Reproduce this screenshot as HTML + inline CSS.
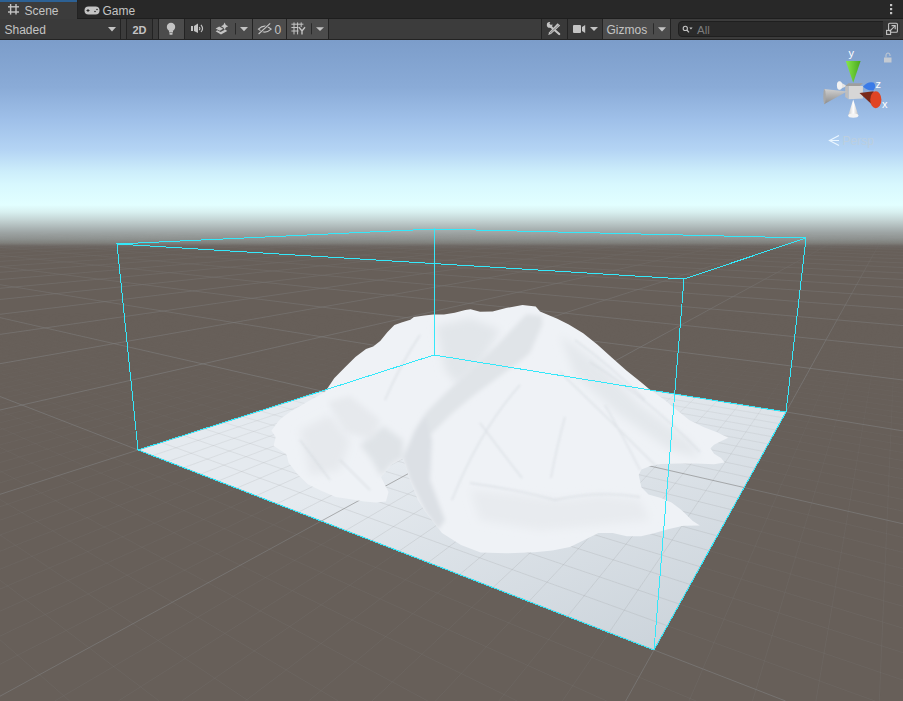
<!DOCTYPE html>
<html><head><meta charset="utf-8"><style>
*{margin:0;padding:0;box-sizing:border-box}
html,body{width:903px;height:701px;overflow:hidden;background:#282828;font-family:"Liberation Sans",sans-serif;position:relative}
.t{position:absolute;color:#c4c4c4;font-size:12px;line-height:14px;white-space:nowrap}
</style></head><body>
<svg width="903" height="40" viewBox="0 0 903 40" style="position:absolute;left:0;top:0">
<rect x="0" y="0" width="903" height="18" fill="#282828"/>
<rect x="0" y="18" width="903" height="1" fill="#1e1e1e"/>
<rect x="0" y="0" width="77" height="19" fill="#3c3c3c"/>
<rect x="0" y="0" width="77" height="2" fill="#2d6194"/>
<rect x="77" y="0" width="1" height="18" fill="#232323"/>
<rect x="0" y="19" width="903" height="20" fill="#3c3c3c"/>
<rect x="0" y="39" width="903" height="1" fill="#232323"/>
<!-- scene tab icon # -->
<g stroke="#c4c4c4" stroke-width="1.4">
<line x1="10.6" y1="4" x2="10.6" y2="14.6"/><line x1="16" y1="4" x2="16" y2="14.6"/>
<line x1="8" y1="6.8" x2="19" y2="6.8"/><line x1="8" y1="12" x2="19" y2="12"/>
</g>
<!-- game icon -->
<rect x="84.5" y="6.5" width="15" height="8" rx="4" fill="#c4c4c4"/>
<g stroke="#282828" stroke-width="1"><line x1="86.5" y1="10.5" x2="89.5" y2="10.5"/><line x1="88" y1="9" x2="88" y2="12"/></g>
<circle cx="95" cy="11.5" r="0.8" fill="#282828"/><circle cx="97" cy="9.5" r="0.8" fill="#282828"/>
<!-- Shaded dropdown -->
<rect x="0" y="19" width="120" height="20" fill="#3a3a3a"/>
<polygon points="108,27 116,27 112,31.6" fill="#c4c4c4"/>
<rect x="120" y="19" width="1" height="20" fill="#232323"/>
<rect x="126" y="19" width="1" height="20" fill="#232323"/>
<rect x="127" y="19" width="25" height="20" fill="#383838"/>
<rect x="152" y="19" width="1" height="20" fill="#232323"/>
<rect x="158" y="19" width="1" height="20" fill="#232323"/>
<rect x="159" y="19" width="25" height="20" fill="#4c4c4c"/>
<rect x="184" y="19" width="1" height="20" fill="#232323"/>
<rect x="185" y="19" width="25" height="20" fill="#383838"/>
<rect x="210" y="19" width="1" height="20" fill="#232323"/>
<rect x="211" y="19" width="41" height="20" fill="#4c4c4c"/>
<rect x="252" y="19" width="1" height="20" fill="#232323"/>
<rect x="253" y="19" width="33" height="20" fill="#4c4c4c"/>
<rect x="286" y="19" width="1" height="20" fill="#232323"/>
<rect x="287" y="19" width="41" height="20" fill="#4c4c4c"/>
<rect x="328" y="19" width="1" height="20" fill="#232323"/>
<!-- bulb -->
<circle cx="171" cy="27" r="4.2" fill="#c4c4c4"/>
<rect x="169" y="31" width="4" height="1.5" fill="#c4c4c4"/>
<rect x="169.3" y="33" width="3.4" height="1.8" rx="0.8" fill="#c4c4c4"/>
<!-- audio -->
<rect x="191" y="26" width="2" height="5" fill="#c4c4c4"/>
<polygon points="194,26 198,23.6 198,33 194,31" fill="#c4c4c4"/>
<path d="M199.2 27.2 Q200.6 28.6 199.2 30" stroke="#c4c4c4" stroke-width="1.1" fill="none"/>
<path d="M201 24.8 Q204 28.6 201 32" stroke="#c4c4c4" stroke-width="1.1" fill="none"/>
<!-- effects -->
<path d="M224.6 22.6 Q225.2 25.7 228.2 26.3 Q225.2 26.9 224.6 30 Q224 26.9 221 26.3 Q224 25.7 224.6 22.6Z" fill="#c4c4c4"/>
<path d="M215.6 28.6 L219.2 26.4 L223.2 28.8 L219.8 30.8 Z" fill="#c4c4c4"/>
<path d="M215.6 31.2 L217.4 30.2 L220.6 32 L225.2 29.6 L227.2 31 L221 34.6 Z" fill="#c4c4c4"/>
<rect x="235" y="23" width="1" height="11.5" fill="#2a2a2a"/>
<polygon points="240,27 248,27 244,31.3" fill="#c4c4c4"/>
<!-- eye slash -->
<path d="M258.4 29.1 Q264.8 23 271.2 29.1 Q264.8 35 258.4 29.1Z" stroke="#c4c4c4" stroke-width="1.1" fill="none"/>
<line x1="258.6" y1="34" x2="270.2" y2="23.3" stroke="#4c4c4c" stroke-width="2.4"/>
<line x1="258.6" y1="34" x2="270.2" y2="23.3" stroke="#c4c4c4" stroke-width="1.1"/>
<!-- grid Y -->
<g stroke="#c4c4c4" stroke-width="1">
<line x1="294" y1="22.4" x2="294" y2="34.4"/><line x1="297.6" y1="22.4" x2="297.6" y2="34.4"/><line x1="301.2" y1="22.4" x2="301.2" y2="27"/>
<line x1="291.4" y1="24.2" x2="303.4" y2="24.2"/><line x1="291.4" y1="27.5" x2="298.5" y2="27.5"/><line x1="291.4" y1="31" x2="298.5" y2="31"/>
</g>
<path d="M299 27.3 L302 31 L305 27.3 M302 31 L302 34.4" stroke="#c4c4c4" stroke-width="1.4" fill="none"/>
<rect x="311" y="23.3" width="1" height="11" fill="#2a2a2a"/>
<polygon points="316,27.2 324,27.2 320,31" fill="#c4c4c4"/>
<!-- right side -->
<rect x="541" y="19" width="1" height="20" fill="#232323"/>
<rect x="542" y="19" width="25" height="20" fill="#393939"/>
<rect x="567" y="19" width="1" height="20" fill="#232323"/>
<rect x="568" y="19" width="34" height="20" fill="#393939"/>
<rect x="602" y="19" width="1" height="20" fill="#232323"/>
<rect x="603" y="19" width="67" height="20" fill="#4c4c4c"/>
<rect x="670" y="19" width="1" height="20" fill="#232323"/>
<!-- tools -->
<line x1="550.5" y1="26.5" x2="559.2" y2="34" stroke="#c4c4c4" stroke-width="2.2" stroke-linecap="round"/>
<circle cx="549.6" cy="24.9" r="2.8" fill="#c4c4c4"/>
<circle cx="551.2" cy="23.3" r="1.5" fill="#393939"/>
<polygon points="557.6,23.2 560.2,25.6 551,34 548.2,35 549.2,32.2" fill="#c4c4c4"/>
<line x1="550" y1="33.2" x2="558.6" y2="25.2" stroke="#393939" stroke-width="0.5"/>
<!-- camera -->
<rect x="573" y="25" width="8" height="8" rx="1" fill="#c4c4c4"/>
<polygon points="582,27 585.2,25 585.2,33 582,31" fill="#c4c4c4"/>
<polygon points="590,27 598,27 594,31" fill="#c4c4c4"/>
<rect x="653" y="23.3" width="1" height="11" fill="#2a2a2a"/>
<polygon points="658,27.2 666,27.2 662,31.6" fill="#c4c4c4"/>
<!-- search -->
<rect x="678.5" y="21.5" width="221" height="15" rx="3.5" fill="#2a2a2a" stroke="#1f1f1f" stroke-width="1"/>
<circle cx="685.3" cy="28.4" r="2.1" stroke="#c4c4c4" stroke-width="1.1" fill="none"/>
<line x1="686.8" y1="30" x2="689" y2="32.4" stroke="#c4c4c4" stroke-width="1.2"/>
<polygon points="689.3,27.6 692.6,27.6 690.95,29.6" fill="#c4c4c4"/>
<rect x="883" y="21" width="8" height="16" fill="#353535"/><rect x="883" y="21" width="17" height="16" rx="3" fill="#353535"/>
<rect x="888.6" y="23.3" width="8.8" height="9" rx="1" stroke="#c4c4c4" stroke-width="1.1" fill="none"/>
<rect x="886.6" y="30.4" width="4" height="4" stroke="#c4c4c4" stroke-width="1.1" fill="#353535"/>
<line x1="889.5" y1="31.3" x2="895" y2="25.8" stroke="#c4c4c4" stroke-width="1.1"/>
<polyline points="891.5,25.6 895.2,25.6 895.2,29.3" stroke="#c4c4c4" stroke-width="1.1" fill="none"/>
<rect x="890" y="4" width="2.2" height="2.2" fill="#c4c4c4"/><rect x="890" y="8" width="2.2" height="2.2" fill="#c4c4c4"/><rect x="890" y="12" width="2.2" height="2.2" fill="#c4c4c4"/>
</svg>
<div class="t" style="left:24.5px;top:4px">Scene</div>
<div class="t" style="left:102.5px;top:4px">Game</div>
<div class="t" style="left:4.5px;top:23px">Shaded</div>
<div class="t" style="left:132.5px;top:23px;font-weight:bold;font-size:11px">2D</div>
<div class="t" style="left:274.5px;top:23px">0</div>
<div class="t" style="left:606.5px;top:23px">Gizmos</div>
<div class="t" style="left:697px;top:23px;color:#7c7c7c;font-size:11.5px">All</div>
<svg width="903" height="661" viewBox="0 40 903 661" style="position:absolute;left:0;top:40px">
<defs>
<linearGradient id="sky" x1="0" y1="40" x2="0" y2="260" gradientUnits="userSpaceOnUse"><stop offset="0.0000" stop-color="#7c9dca"/><stop offset="0.2136" stop-color="#8aabd7"/><stop offset="0.3636" stop-color="#9fc0e9"/><stop offset="0.5000" stop-color="#b4d4f4"/><stop offset="0.6000" stop-color="#cdeefb"/><stop offset="0.6591" stop-color="#d8f8fe"/><stop offset="0.7500" stop-color="#e2ffff"/><stop offset="0.7818" stop-color="#d8f0f0"/><stop offset="0.8182" stop-color="#c4d4d4"/><stop offset="0.8682" stop-color="#a2aaaa"/><stop offset="0.9045" stop-color="#8e9290"/><stop offset="0.9227" stop-color="#80807c"/><stop offset="0.9364" stop-color="#6c6662"/><stop offset="0.9545" stop-color="#675f59"/><stop offset="1.0000" stop-color="#675f59"/></linearGradient>
<linearGradient id="fmin" x1="0" y1="40" x2="0" y2="701" gradientUnits="userSpaceOnUse"><stop offset="0.4105" stop-color="#fff" stop-opacity="0"/><stop offset="0.4811" stop-color="#fff" stop-opacity="0.25"/><stop offset="0.5584" stop-color="#fff" stop-opacity="0.6"/><stop offset="0.7130" stop-color="#fff" stop-opacity="0.95"/><stop offset="1.1766" stop-color="#fff" stop-opacity="1"/></linearGradient>
<linearGradient id="fmaj" x1="0" y1="40" x2="0" y2="701" gradientUnits="userSpaceOnUse"><stop offset="0.2905" stop-color="#fff" stop-opacity="0"/><stop offset="0.3234" stop-color="#fff" stop-opacity="0.25"/><stop offset="0.3729" stop-color="#fff" stop-opacity="0.6"/><stop offset="0.4966" stop-color="#fff" stop-opacity="1"/><stop offset="1.1766" stop-color="#fff" stop-opacity="1"/></linearGradient>
<mask id="mmin" maskUnits="userSpaceOnUse" x="0" y="40" width="903" height="661"><rect x="0" y="40" width="903" height="661" fill="url(#fmin)"/></mask>
<mask id="mmaj" maskUnits="userSpaceOnUse" x="0" y="40" width="903" height="661"><rect x="0" y="40" width="903" height="661" fill="url(#fmaj)"/></mask>
</defs>
<rect x="0" y="40" width="903" height="661" fill="#675f59"/>
<rect x="0" y="40" width="903" height="220" fill="url(#sky)"/>
<linearGradient id="pl" x1="654" y1="650" x2="560" y2="400" gradientUnits="userSpaceOnUse"><stop offset="0" stop-color="#ccd4db"/><stop offset="1" stop-color="#e5eaef"/></linearGradient>
<polygon points="138,450 434,355 786,412 654,650" fill="url(#pl)"/>
<g mask="url(#mmin)"><path d="M0.0 281.9L6.2 281.4M0.0 282.8L16.0 281.4M0.0 283.6L25.8 281.4M0.0 284.5L35.6 281.4M0.0 285.4L45.4 281.4M0.0 286.4L55.2 281.4M0.0 287.3L65.0 281.4M0.0 289.3L84.6 281.4M0.0 290.3L94.4 281.4M0.0 291.4L104.2 281.4M0.0 292.5L113.9 281.4M0.0 293.6L123.7 281.4M0.0 294.7L133.5 281.4M0.0 295.9L143.3 281.4M0.0 297.1L153.1 281.5M0.0 298.3L162.9 281.5M0.0 300.8L182.5 281.5M0.0 302.2L192.3 281.5M0.0 303.5L202.1 281.5M0.0 304.9L211.9 281.5M0.0 306.4L221.7 281.5M0.0 307.9L231.5 281.5M0.0 309.4L241.3 281.5M0.0 311.0L251.0 281.5M0.0 312.6L260.8 281.5M0.0 316.0L280.4 281.5M0.0 317.8L290.2 281.5M0.0 319.6L300.0 281.5M0.0 321.5L309.8 281.5M0.0 323.5L319.6 281.5M0.0 325.5L329.4 281.5M0.0 327.7L339.2 281.5M0.0 329.8L349.0 281.6M0.0 332.1L358.8 281.6M0.0 336.9L378.4 281.6M0.0 339.4L388.1 281.6M0.0 342.0L397.9 281.6M0.0 344.7L407.7 281.6M0.0 347.6L417.5 281.6M0.0 350.5L427.3 281.6M0.0 353.6L437.1 281.6M0.0 356.8L446.9 281.6M0.0 360.2L456.7 281.6M0.0 367.4L476.3 281.6M0.0 371.2L486.1 281.6M0.0 375.2L495.9 281.6M0.0 379.4L505.7 281.6M0.0 383.9L515.5 281.6M0.0 388.6L525.2 281.6M0.0 393.5L535.0 281.6M0.0 398.7L544.8 281.7M0.0 404.2L554.6 281.7M0.0 416.1L574.2 281.7M0.0 639.8L69.7 701.0M0.0 422.7L584.0 281.7M0.0 580.2L159.2 701.0M0.0 429.6L593.8 281.7M0.0 535.0L248.8 701.0M0.0 437.0L603.6 281.7M0.0 499.5L338.3 701.0M0.0 444.9L613.4 281.7M0.0 470.9L427.8 701.0M0.0 453.4L623.2 281.7M0.0 447.4L517.2 701.0M0.0 462.5L633.0 281.7M0.0 427.7L606.7 701.0M0.0 472.3L642.8 281.7M0.0 410.9L696.2 701.0M0.0 482.9L652.6 281.7M0.0 384.0L875.0 701.0M0.0 506.7L672.1 281.7M0.0 373.0L903.0 680.1M0.0 520.2L681.9 281.7M0.0 363.3L903.0 652.7M0.0 535.0L691.7 281.7M0.0 354.6L903.0 628.2M0.0 551.2L701.5 281.7M0.0 346.9L903.0 606.3M0.0 569.2L711.3 281.7M0.0 339.9L903.0 586.6M0.0 589.0L721.1 281.7M0.0 333.5L903.0 568.7M0.0 611.2L730.9 281.7M0.0 327.7L903.0 552.4M0.0 636.1L740.7 281.8M-0.0 322.5L903.0 537.5M0.0 664.2L750.5 281.8M0.0 313.2L903.0 511.2M54.7 701.0L770.1 281.8M0.0 309.0L903.0 499.6M118.2 701.0L779.9 281.8M0.0 305.2L903.0 488.8M181.7 701.0L789.7 281.8M0.0 301.7L903.0 478.8M245.1 701.0L799.4 281.8M0.0 298.4L903.0 469.5M308.6 701.0L809.2 281.8M0.0 295.3L903.0 460.7M372.0 701.0L819.0 281.8M-0.0 292.4L903.0 452.6M435.5 701.0L828.8 281.8M0.0 289.7L903.0 444.9M498.9 701.0L838.6 281.8M0.0 287.1L903.0 437.7M562.3 701.0L848.4 281.8M0.0 282.5L903.0 424.6M689.1 701.0L868.0 281.8M6.9 281.4L903.0 418.5M752.5 701.0L877.8 281.8M20.8 281.4L903.0 412.8M815.9 701.0L887.6 281.8M34.6 281.4L903.0 407.4M879.3 701.0L897.4 281.8M48.4 281.4L903.0 402.2M62.3 281.4L903.0 397.3M76.1 281.4L903.0 392.7M89.9 281.4L903.0 388.3M103.8 281.4L903.0 384.0M131.5 281.4L903.0 376.1M145.3 281.4L903.0 372.5M159.1 281.5L903.0 368.9M173.0 281.5L903.0 365.5M186.8 281.5L903.0 362.3M200.6 281.5L903.0 359.2M214.5 281.5L903.0 356.2M228.3 281.5L903.0 353.3M242.1 281.5L903.0 350.5M269.8 281.5L903.0 345.2M283.6 281.5L903.0 342.8M297.5 281.5L903.0 340.4M311.3 281.5L903.0 338.0M325.1 281.5L903.0 335.8M339.0 281.5L903.0 333.6M352.8 281.6L903.0 331.5M366.7 281.6L903.0 329.5M380.5 281.6L903.0 327.5M408.2 281.6L903.0 323.8M422.0 281.6L903.0 322.0M435.8 281.6L903.0 320.3M449.7 281.6L903.0 318.6M463.5 281.6L903.0 317.0M477.3 281.6L903.0 315.4M491.2 281.6L903.0 313.8M505.0 281.6L903.0 312.3M518.8 281.6L903.0 310.9M546.5 281.7L903.0 308.1M560.3 281.7L903.0 306.7M574.2 281.7L903.0 305.4M588.0 281.7L903.0 304.1M601.9 281.7L903.0 302.9M615.7 281.7L903.0 301.6M629.5 281.7L903.0 300.5M643.4 281.7L903.0 299.3M657.2 281.7L903.0 298.2M684.9 281.7L903.0 296.0M698.7 281.7L903.0 294.9M712.5 281.7L903.0 293.9M726.4 281.7L903.0 292.9M740.2 281.8L903.0 291.9M754.0 281.8L903.0 291.0M767.9 281.8L903.0 290.0M781.7 281.8L903.0 289.1M795.6 281.8L903.0 288.2M823.2 281.8L903.0 286.5M837.1 281.8L903.0 285.6M850.9 281.8L903.0 284.8M864.7 281.8L903.0 284.0M878.6 281.8L903.0 283.2M892.4 281.8L903.0 282.4" stroke="#808080" stroke-opacity="0.16" stroke-width="1" fill="none"/></g>
<g mask="url(#mmaj)"><path d="M0.0 220.3L10.8 220.1M0.0 220.6L30.4 220.1M0.0 221.0L50.0 220.1M0.0 221.4L69.6 220.1M0.0 221.8L89.2 220.1M0.0 222.2L108.8 220.1M0.0 222.6L128.3 220.1M0.0 223.1L147.9 220.2M0.0 223.6L167.5 220.2M0.0 224.1L187.1 220.2M0.0 224.6L206.7 220.2M0.0 225.2L226.3 220.2M0.0 225.8L245.9 220.2M0.0 226.5L265.4 220.2M0.0 227.2L285.0 220.2M0.0 227.9L304.6 220.2M0.0 228.7L324.2 220.2M0.0 229.5L343.8 220.3M0.0 230.4L363.4 220.3M0.0 231.4L383.0 220.3M0.0 232.5L402.5 220.3M0.0 233.6L422.1 220.3M0.0 234.8L441.7 220.3M0.0 236.2L461.3 220.3M0.0 237.6L480.9 220.3M0.0 239.2L500.5 220.3M0.0 241.0L520.1 220.3M0.0 243.0L539.6 220.4M0.0 245.2L559.2 220.4M0.0 247.6L578.8 220.4M0.0 250.4L598.4 220.4M0.0 253.6L618.0 220.4M0.0 257.2L637.6 220.4M0.0 261.4L657.2 220.4M0.0 266.4L676.7 220.4M0.0 272.3L696.3 220.4M0.0 279.5L715.9 220.4M0.0 288.3L735.5 220.5M0.0 299.5L755.1 220.5M0.0 314.3L774.7 220.5M0.0 334.4L794.3 220.5M0.0 363.7L813.8 220.5M0.0 410.0L833.4 220.5M0.0 396.5L785.6 701.0M0.0 494.3L853.0 220.5M0.0 317.6L903.0 523.8M0.0 696.2L872.6 220.5M0.0 284.7L903.0 430.9M625.7 701.0L892.2 220.5M0.0 266.7L903.0 380.0M0.0 255.3L903.0 347.8M0.0 247.4L903.0 325.6M0.0 241.7L903.0 309.4M0.0 237.3L903.0 297.1M0.0 233.8L903.0 287.3M0.0 231.1L903.0 279.5M0.0 228.8L903.0 273.0M0.0 226.8L903.0 267.5M0.0 225.2L903.0 262.9M0.0 223.8L903.0 258.9M0.0 222.5L903.0 255.4M0.0 221.5L903.0 252.4M0.0 220.5L903.0 249.6M14.6 220.1L903.0 247.2M42.3 220.1L903.0 245.1M70.0 220.1L903.0 243.1M97.6 220.1L903.0 241.4M125.3 220.1L903.0 239.7M153.0 220.2L903.0 238.3M180.6 220.2L903.0 236.9M208.3 220.2L903.0 235.7M236.0 220.2L903.0 234.5M263.6 220.2L903.0 233.5M291.3 220.2L903.0 232.5M319.0 220.2L903.0 231.5M346.7 220.3L903.0 230.7M374.3 220.3L903.0 229.9M402.0 220.3L903.0 229.1M429.7 220.3L903.0 228.4M457.3 220.3L903.0 227.7M485.0 220.3L903.0 227.1M512.7 220.3L903.0 226.5M540.4 220.4L903.0 225.9M568.0 220.4L903.0 225.4M595.7 220.4L903.0 224.9M623.4 220.4L903.0 224.4M651.0 220.4L903.0 223.9M678.7 220.4L903.0 223.5M706.4 220.4L903.0 223.1M734.1 220.5L903.0 222.6M761.7 220.5L903.0 222.3M789.4 220.5L903.0 221.9M817.1 220.5L903.0 221.5M844.7 220.5L903.0 221.2M872.4 220.5L903.0 220.9M900.1 220.5L903.0 220.6" stroke="#808080" stroke-opacity="0.6" stroke-width="1" fill="none"/></g>
<clipPath id="mclip"><path d="M281.4 418.2 L277.8 422 L271.4 430.7 L275.7 437 L273.6 445.7 L286.4 454.2 L288.6 462.8 L297 473.5 L307.8 484.2 L320.7 490.6 L335.7 497 L350.7 499.2 L364 501.5 L376 502.5 L386 501.5 L388.5 492 L381 477 L391 465 L403 458 L410 480 L418 500 L425 511 L442 533 L461 545 L480.6 552.4 L506.3 553.3 L534.7 552.3 L552.4 550.5 L570 547 L584.3 540 L598.4 533 L612.6 533 L626.8 536.3 L641 536.3 L655 533 L669 529 L683.5 525.7 L699.9 525.4 L692.8 521 L682 510.4 L671.5 502.4 L661 498 L648.5 494.4 L641.4 487.3 L638.7 474.9 L641.4 469.6 L651 465.7 L661 464 L678.6 463.4 L696.3 463.4 L714 464.3 L724.7 462.5 L721 458 L714 453.7 L710.5 448.3 L714 444.8 L721 441.3 L728.2 437.7 L717.6 432.4 L703.4 427 L689.2 420 L678 411 L664 399.4 L649.4 389.3 L640.8 382 L626.4 370.6 L612 357.7 L597.6 344.7 L583.2 333.2 L568.8 324.6 L557.3 318.8 L540 311.6 L535.7 306.6 L522.5 305 L506 308 L492.6 311.6 L480 311.8 L470.6 309.2 L465.3 310.1 L454.7 312.7 L444 314.5 L433.4 314.5 L424.5 315.4 L413.9 317.1 L410.4 319.8 L401.5 322.5 L394.4 325.1 L387.3 332.2 L380.2 341 L373.2 346.4 L366 349 L355.4 357 L344.8 367.6 L334.2 378.3 L325 392 L305.7 402.8 L290.7 411.4Z"/></clipPath>
<filter id="b2" x="-20%" y="-20%" width="140%" height="140%"><feGaussianBlur stdDeviation="2"/></filter>
<filter id="b4" x="-20%" y="-20%" width="140%" height="140%"><feGaussianBlur stdDeviation="4"/></filter>
<path d="M281.4 418.2 L277.8 422 L271.4 430.7 L275.7 437 L273.6 445.7 L286.4 454.2 L288.6 462.8 L297 473.5 L307.8 484.2 L320.7 490.6 L335.7 497 L350.7 499.2 L364 501.5 L376 502.5 L386 501.5 L388.5 492 L381 477 L391 465 L403 458 L410 480 L418 500 L425 511 L442 533 L461 545 L480.6 552.4 L506.3 553.3 L534.7 552.3 L552.4 550.5 L570 547 L584.3 540 L598.4 533 L612.6 533 L626.8 536.3 L641 536.3 L655 533 L669 529 L683.5 525.7 L699.9 525.4 L692.8 521 L682 510.4 L671.5 502.4 L661 498 L648.5 494.4 L641.4 487.3 L638.7 474.9 L641.4 469.6 L651 465.7 L661 464 L678.6 463.4 L696.3 463.4 L714 464.3 L724.7 462.5 L721 458 L714 453.7 L710.5 448.3 L714 444.8 L721 441.3 L728.2 437.7 L717.6 432.4 L703.4 427 L689.2 420 L678 411 L664 399.4 L649.4 389.3 L640.8 382 L626.4 370.6 L612 357.7 L597.6 344.7 L583.2 333.2 L568.8 324.6 L557.3 318.8 L540 311.6 L535.7 306.6 L522.5 305 L506 308 L492.6 311.6 L480 311.8 L470.6 309.2 L465.3 310.1 L454.7 312.7 L444 314.5 L433.4 314.5 L424.5 315.4 L413.9 317.1 L410.4 319.8 L401.5 322.5 L394.4 325.1 L387.3 332.2 L380.2 341 L373.2 346.4 L366 349 L355.4 357 L344.8 367.6 L334.2 378.3 L325 392 L305.7 402.8 L290.7 411.4Z" fill="#eff2f6"/>
<g clip-path="url(#mclip)">
<g filter="url(#b4)">
<polygon points="436,326 470,318 500,330 480,365 458,385 445,370" fill="#e2e6ea"/>
<polygon points="300,430 330,415 350,440 340,470 310,475" fill="#e6e9ed"/>
<polygon points="560,335 600,365 640,405 690,442 700,458 670,450 620,415 575,375" fill="#e4e8ec"/>
<polygon points="470,490 520,495 560,500 600,495 640,500 650,520 600,525 540,530 480,520" fill="#e8ebef"/>
</g>
<g filter="url(#b2)">
<polygon points="526.3,314.2 496.2,346 473.2,367.3 446.6,392.1 427,411.6 415,430 405,455 410,470 425,440 451.9,413.4 473.2,395.7 499.7,376.2 519.2,362 529.8,353.2 542.3,324.8 542.3,316" fill="#e0e4e8"/>
<polygon points="403,458 415,430 425,415 432,440 430,480 445,520 438,530 425,511 410,480" fill="#dce0e5"/>
<polygon points="383.6,426 403,440 403,458 391,465 381,477 372,460 360,445" fill="#dfe3e7" filter="url(#b2)"/>
<polygon points="328,402 350,396 380,420 372,440 345,432" fill="#e6e9ed" filter="url(#b2)"/>
</g>
<filter id="b1" x="-20%" y="-20%" width="140%" height="140%"><feGaussianBlur stdDeviation="0.8"/></filter>
<g stroke="#cdd2d8" fill="none" stroke-width="1.4" opacity="0.5" filter="url(#b1)">
<path d="M575 340 Q610 365 645 400"/><path d="M590 362 Q650 400 700 452"/><path d="M560 372 Q610 420 660 470"/><path d="M605 405 Q625 440 640 470"/>
<path d="M480 423 Q500 450 522 478"/><path d="M565 417 Q556 450 551 478"/><path d="M520 385 Q480 430 452 500"/>
<path d="M470 483 Q520 490 555 500"/><path d="M555 500 Q600 490 640 497"/>
<path d="M300 440 Q315 460 330 480"/><path d="M340 460 Q355 475 370 490"/><path d="M420 335 Q400 365 385 400"/>
</g>
</g>
<g stroke="#34e8fa" stroke-width="1" fill="none" shape-rendering="crispEdges">
<polyline points="117,244 434,229 806,238 684,279 117,244 138,450 654,650 786,412 806,238"/>
<line x1="684" y1="279" x2="654" y2="650"/>
<polyline points="138,450 434,355 786,412"/>
<line x1="434" y1="229" x2="434" y2="355"/>
</g>
</svg>
<svg width="90" height="110" viewBox="815 40 90 110" style="position:absolute;left:815px;top:40px">
<defs>
<linearGradient id="gy" x1="0" x2="1"><stop offset="0" stop-color="#86e84a"/><stop offset="1" stop-color="#4aa820"/></linearGradient>
<linearGradient id="gl" x1="0" y1="0" x2="0" y2="1"><stop offset="0" stop-color="#d0d0d0"/><stop offset="1" stop-color="#8a8a8a"/></linearGradient>
<linearGradient id="gw" x1="0" x2="1"><stop offset="0" stop-color="#c8c8c8"/><stop offset="0.5" stop-color="#ffffff"/><stop offset="1" stop-color="#c0c0c0"/></linearGradient>
</defs>
<!-- back white small cone (-z) -->
<path d="M847 86 L839 81.5 Q836 85 839 89.5 Z" fill="#e4e4e4"/>
<ellipse cx="839.5" cy="85.5" rx="2.6" ry="4.2" fill="#f2f2f2"/>
<!-- green y cone -->
<polygon points="845.8,61 860.6,61 853.2,82.7" fill="url(#gy)"/>
<!-- cube -->
<polygon points="845.2,86 848.5,83.2 862.9,83.2 859.8,86" fill="#9e9e9e"/>
<polygon points="848.5,86 862.9,86 862.9,98.5 848.5,99.2" fill="#d6d6d6"/>
<polygon points="845.2,86 848.5,86 848.5,99.2 845.2,97" fill="#bdbdbd"/>
<!-- left gray cone (-x) -->
<polygon points="847,91.5 824,89 824,104.3" fill="url(#gl)"/>
<ellipse cx="824.5" cy="96.5" rx="1.2" ry="7.6" fill="#a8a8a8"/>
<!-- blue z cone -->
<path d="M863 86.5 Q868 81 873.5 82.5 Q877 86 873.5 90.5 Q867 91 863 86.5Z" fill="#3a7be8"/>
<!-- red x cone -->
<polygon points="859.5,93 873.5,91.3 876,108.3" fill="#7a2a1a"/>
<ellipse cx="875.8" cy="99.8" rx="5.6" ry="8.5" fill="#e04424"/>
<!-- white -y cone -->
<polygon points="853.2,99.5 848.2,115.5 858.4,115.5" fill="url(#gw)"/>
<ellipse cx="853.3" cy="115.6" rx="5.1" ry="2.2" fill="#f4f4f4"/>
<!-- labels -->
<text x="848.5" y="57" font-family="Liberation Sans" font-size="11" fill="#ffffff">y</text>
<text x="875.5" y="88" font-family="Liberation Sans" font-size="11" fill="#ffffff">z</text>
<text x="882" y="107.8" font-family="Liberation Sans" font-size="11" fill="#ffffff">x</text>
<!-- lock -->
<rect x="884" y="57.5" width="7.5" height="5" fill="#c4cad2"/>
<path d="M886 57.5 V55 A2 2 0 0 1 890 55 V56" stroke="#c4cad2" stroke-width="1" fill="none"/>
<!-- persp -->
<path d="M839 135.5 L829.5 140.5 L839 145.5 M829.5 140.5 L839 140.5" stroke="#eaf6ff" stroke-width="1.2" fill="none"/>
<text x="842.5" y="144.6" font-family="Liberation Sans" font-size="12" fill="#bccfdf">Persp</text>
</svg>
</body></html>
